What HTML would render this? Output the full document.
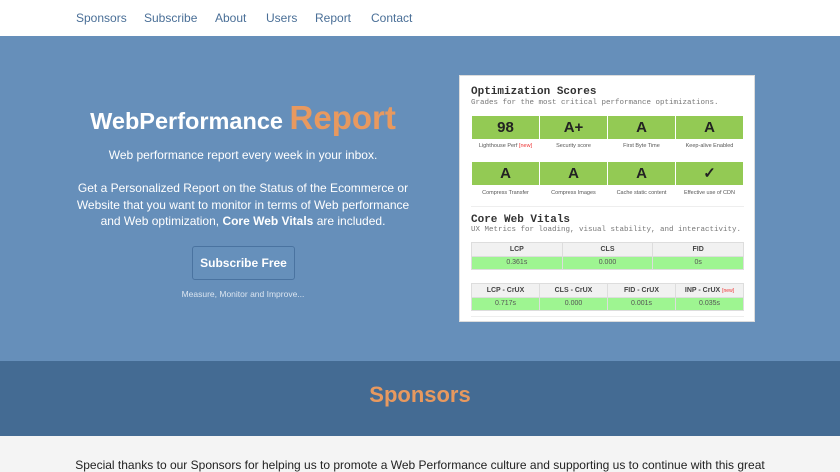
<!DOCTYPE html>
<html><head><meta charset="utf-8"><style>
*{margin:0;padding:0;box-sizing:border-box}
body{width:840px;height:472px;overflow:hidden;font-family:"Liberation Sans",sans-serif;background:#f4f4f4}
nav{height:36px;background:#fff;position:relative}
nav a{position:absolute;top:11px;font-size:12px;color:#4a6f97;text-decoration:none}
.hero{position:absolute;top:36px;left:0;width:840px;height:325px;background:#668fba}
.left{position:absolute;left:73px;width:340px;text-align:center;color:#fff}
h1{position:absolute;top:99px;left:43px;width:400px;text-align:center;color:#fff;font-size:23.5px;font-weight:bold;white-space:nowrap}
h1 span{color:#e8995f;font-size:33px}
.p{font-size:12px;line-height:16.5px}
.btn{position:absolute;left:192px;top:246px;width:103px;height:34px;border:1px solid #4a73a0;border-radius:3px;color:#fff;font-weight:bold;font-size:12px;text-align:center;line-height:32px;background:#6690bb}
.card{position:absolute;left:459px;top:75px;width:296px;height:247px;background:#fff;border:1px solid #dcdcdc;font-family:"Liberation Mono",monospace}
.card h3{position:absolute;left:11px;font-size:11px;font-weight:bold;color:#333}
.card .s{position:absolute;left:11px;font-size:7.5px;color:#777}
.g{position:absolute;width:67px;height:23px;background:#93ca54;font-family:"Liberation Sans";font-weight:bold;font-size:15px;text-align:center;line-height:23px;color:#222}
.l{position:absolute;width:67px;text-align:center;font-family:"Liberation Sans";font-size:5.5px;color:#555}
.l b{color:#e33;font-weight:normal}
table{position:absolute;left:11px;border-collapse:collapse;font-family:"Liberation Sans";font-size:7px;color:#444;width:273px;table-layout:fixed}
td{border:1px solid #ddd;text-align:center;height:13.5px;padding:0}
tr.h td{background:#f1f1f1;font-weight:bold}
tr.v td{background:#9ef591;color:#555}
.hr{position:absolute;left:11px;width:273px;border-top:1px solid #eee}
.band{position:absolute;top:361px;left:0;width:840px;height:75px;background:#446b93;text-align:center;color:#e8995f;font-size:22px;font-weight:bold;line-height:68px}
.bot{position:absolute;top:458px;left:0;width:840px;text-align:center;font-size:12px;color:#222}
</style></head><body>
<nav><a style="left:76px">Sponsors</a><a style="left:144px">Subscribe</a><a style="left:215px">About</a><a style="left:266px">Users</a><a style="left:315px">Report</a><a style="left:371px">Contact</a></nav>
<div class="hero"></div>
<h1>WebPerformance <span>Report</span></h1>
<div class="left p" style="top:147px">Web performance report every week in your inbox.</div>
<div class="left p" style="top:180px">Get a Personalized Report on the Status of the Ecommerce or Website that you want to monitor in terms of Web performance and Web optimization, <b>Core Web Vitals</b> are included.</div>
<div class="btn">Subscribe Free</div>
<div class="left" style="top:289px;font-size:8.5px;color:#dbe5f0">Measure, Monitor and Improve...</div>
<div class="card">
<h3 style="top:10px">Optimization Scores</h3>
<div class="s" style="top:23px">Grades for the most critical performance optimizations.</div>
<div class="g" style="left:12px;top:40px">98</div><div class="g" style="left:80px;top:40px">A+</div><div class="g" style="left:148px;top:40px">A</div><div class="g" style="left:216px;top:40px">A</div>
<div class="l" style="left:12px;top:67px">Lighthouse Perf <b>[new]</b></div><div class="l" style="left:80px;top:67px">Security score</div><div class="l" style="left:148px;top:67px">First Byte Time</div><div class="l" style="left:216px;top:67px">Keep-alive Enabled</div>
<div class="g" style="left:12px;top:86px">A</div><div class="g" style="left:80px;top:86px">A</div><div class="g" style="left:148px;top:86px">A</div><div class="g" style="left:216px;top:86px">✓</div>
<div class="l" style="left:12px;top:114px">Compress Transfer</div><div class="l" style="left:80px;top:114px">Compress Images</div><div class="l" style="left:148px;top:114px">Cache static content</div><div class="l" style="left:216px;top:114px">Effective use of CDN</div>
<div class="hr" style="top:130px"></div>
<h3 style="top:138px">Core Web Vitals</h3>
<div class="s" style="top:150px">UX Metrics for loading, visual stability, and interactivity.</div>
<table style="top:166px"><tr class="h"><td>LCP</td><td>CLS</td><td>FID</td></tr><tr class="v"><td>0.361s</td><td>0.000</td><td>0s</td></tr></table>
<table style="top:207px"><tr class="h"><td>LCP - CrUX</td><td>CLS - CrUX</td><td>FID - CrUX</td><td>INP - CrUX <span style="color:#e33;font-weight:normal;font-size:5px">[new]</span></td></tr><tr class="v"><td>0.717s</td><td>0.000</td><td>0.001s</td><td>0.035s</td></tr></table>
<div class="hr" style="top:240px"></div>
</div>
<div class="band">Sponsors</div>
<div class="bot">Special thanks to our Sponsors for helping us to promote a Web Performance culture and supporting us to continue with this great</div>
</body></html>
